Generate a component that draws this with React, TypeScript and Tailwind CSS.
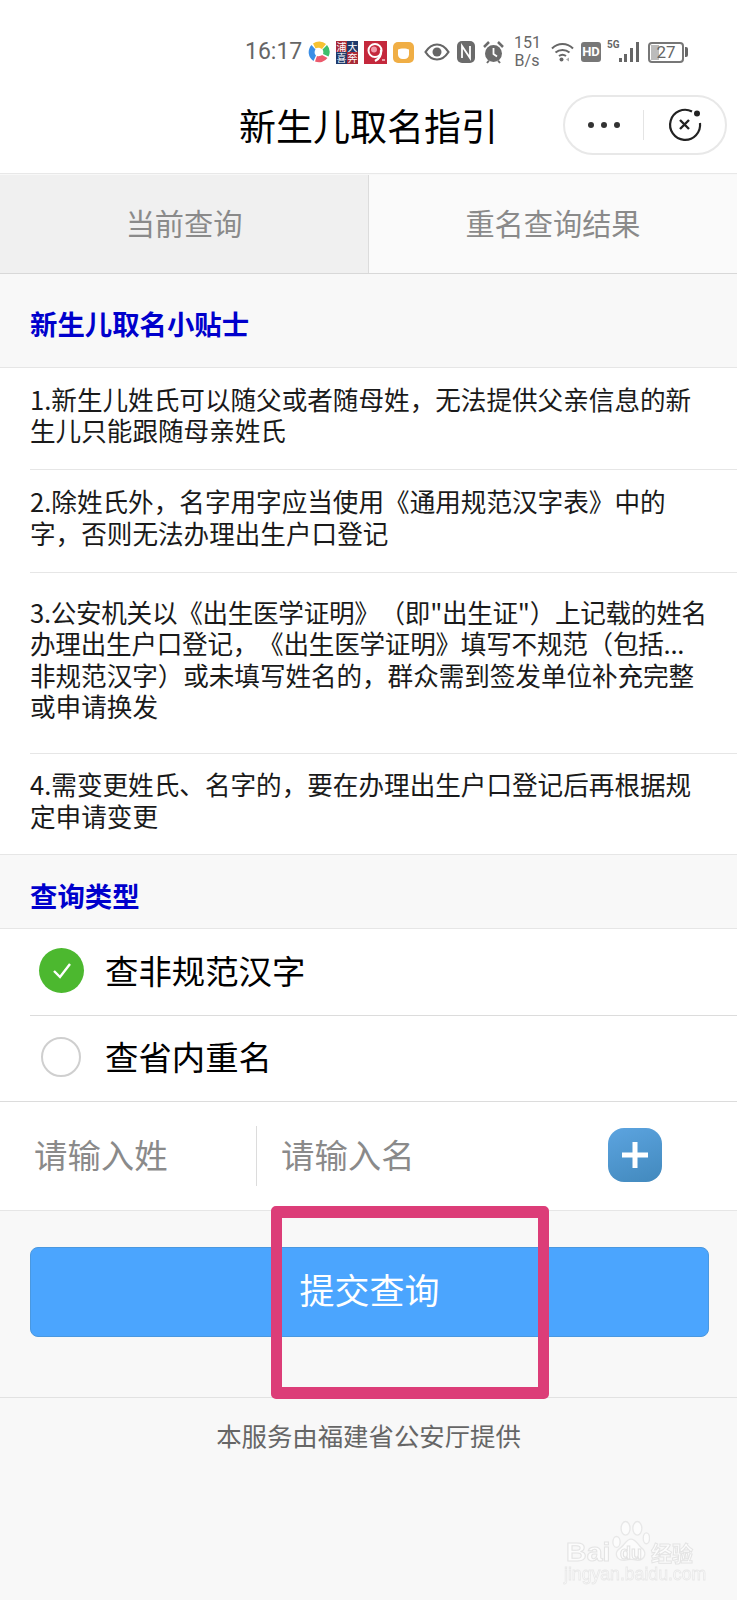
import React from "react";

const root = "font-['Noto_Sans_CJK_SC','Noto_Sans',sans-serif] [text-spacing-trim:space-all]";

function StatusBar() {
  return (
    <div className="h-[85px] bg-white flex items-center pl-[245px] pt-[19px] text-[#666]">
      <span className="text-[23px] w-[63px] font-['Roboto',sans-serif]">16:17</span>
      <svg width="22" height="22" viewBox="0 0 22 22">
        <path d="M5 2.500A10.500 10.500 0 0 1 18 3l-4 5C11 6 9 6.500 7.500 7.500z" fill="#f6c232" />
        <path d="M19 4a10.500 10.500 0 0 1 1.500 11.500L15 13c.5-1.500.5-3-.5-4.500z" fill="#3fbf6b" />
        <path d="M19.500 17A10.500 10.500 0 0 1 7 20.500l2-5.500c2 .5 4 0 5-1z" fill="#ec5a6c" />
        <path d="M5.500 20A10.500 10.500 0 0 1 3.500 4l4 4.500C6 10.500 6.500 13 8 14.500z" fill="#3a8ee6" />
      </svg>
      <div className="ml-[6px] w-[22px] h-[23px] grid grid-cols-2 grid-rows-2 text-white text-[10px] leading-[11px] text-center">
        <span className="bg-[#a82a36]">浦</span>
        <span className="bg-[#1f3a6b]">大</span>
        <span className="bg-[#1f3a6b]">喜</span>
        <span className="bg-[#a82a36]">奔</span>
      </div>
      <svg width="23" height="23" viewBox="0 0 23 23" className="ml-[6px]">
        <rect width="23" height="23" fill="#c4283c" />
        <circle cx="11" cy="9.500" r="6.500" fill="none" stroke="#fff" strokeWidth="2" />
        <circle cx="10" cy="8.500" r="3" fill="#f29bab" />
        <path d="M17 9c.5 5-2 9-6 11" fill="none" stroke="#fff" strokeWidth="2.200" />
        <path d="M18 19h3" stroke="#f3c9cf" strokeWidth="1.500" />
      </svg>
      <svg width="21" height="21" viewBox="0 0 21 21" className="ml-[6px]">
        <rect width="21" height="21" rx="5" fill="#f0ae45" />
        <path d="M5 7.500c2-1.500 9-1.500 11 0v5a4.500 4.500 0 0 1-4.500 4.500h-2A4.500 4.500 0 0 1 5 12.500z" fill="#fff" />
      </svg>
      <svg width="26" height="18" viewBox="0 0 26 18" className="ml-[10px]">
        <path d="M1.500 9C5 3.500 9 1.500 13 1.500S21 3.500 24.500 9C21 14.500 17 16.500 13 16.500S5 14.500 1.500 9z" fill="none" stroke="#666" strokeWidth="2.200" />
        <circle cx="13" cy="9" r="4.500" fill="#666" />
      </svg>
      <svg width="18" height="22" viewBox="0 0 18 22" className="ml-[7px]">
        <rect width="18" height="22" rx="5" fill="#6b6b6b" />
        <path d="M5 17V5l8 12V5" fill="none" stroke="#fff" strokeWidth="1.800" />
      </svg>
      <svg width="21" height="23" viewBox="0 0 21 23" className="ml-[8px]">
        <circle cx="10.500" cy="12.500" r="8.500" fill="#6b6b6b" />
        <path d="M10.500 7v6l3.500 2.500" fill="none" stroke="#fff" strokeWidth="1.800" />
        <path d="M1 6l5-5M20 6l-5-5" stroke="#6b6b6b" strokeWidth="2.500" />
        <path d="M4 22l2-2.500M17 22l-2-2.500" stroke="#6b6b6b" strokeWidth="2" />
      </svg>
      <div className="ml-[10px] w-[26px] text-[16px] leading-[18px] text-center font-['Roboto',sans-serif]">
        151
        <br />
        B/s
      </div>
      <svg width="23" height="20" viewBox="0 0 23 20" className="ml-[11px]">
        <path d="M1 6.500c6-6 15-6 21 0M4.500 10.500c4-3.500 10-3.500 14 0M8 14c2-1.500 5-1.500 7 0" fill="none" stroke="#666" strokeWidth="2" />
        <circle cx="10.500" cy="17.500" r="2" fill="#666" />
        <path d="M15 17.500l3-2v4z" fill="#aaa" />
      </svg>
      <div className="ml-[7px] w-[20px] h-[20px] bg-[#777] rounded-[3px] text-white text-[13px] leading-[20px] text-center font-bold font-['Roboto',sans-serif]">
        HD
      </div>
      <div className="ml-[6px] w-[33px] h-[22px] relative">
        <span className="absolute left-0 top-[-1px] text-[10px] leading-[10px] font-bold font-['Roboto',sans-serif]">5G</span>
        <svg width="33" height="22" viewBox="0 0 33 22" className="absolute left-0 top-0">
          <rect x="12" y="17" width="3" height="4" fill="#666" />
          <rect x="17" y="13" width="3" height="8" fill="#666" />
          <rect x="23" y="7" width="3" height="14" fill="#666" />
          <rect x="29" y="1" width="3" height="20" fill="#666" />
        </svg>
      </div>
      <div className="ml-[8px] w-[36px] h-[21px] border-2 border-[#777] rounded-[4px] relative text-[17px] leading-[17px] text-center font-['Roboto',sans-serif]">
        <div className="absolute left-[1px] top-[1px] bottom-[1px] w-[8px] bg-[#bbb]" />
        <span className="relative">27</span>
      </div>
      <div className="ml-[1px] w-[3px] h-[10px] bg-[#666] rounded-r-[2px]" />
    </div>
  );
}

function TitleBar() {
  return (
    <div className="h-[89px] bg-white border-b border-[#e8e8e8] relative flex items-center pl-[239px] pb-[9px]">
      <span className="text-[37px] leading-[50px] text-black">新生儿取名指引</span>
      <div className="absolute left-[563px] top-[10px] w-[164px] h-[60px] rounded-full border-2 border-[#e8e8e8] flex items-center">
        <div className="w-[78px] flex justify-center gap-[7px]">
          <span className="w-[6px] h-[6px] rounded-full bg-[#333]" />
          <span className="w-[6px] h-[6px] rounded-full bg-[#333]" />
          <span className="w-[6px] h-[6px] rounded-full bg-[#333]" />
        </div>
        <div className="w-[1px] h-[30px] bg-[#e4e4e4]" />
        <svg width="36" height="36" viewBox="0 0 36 36" className="ml-[23px]">
          <path d="M25 4.500A15 15 0 1 0 33 16" fill="none" stroke="#222" strokeWidth="2.200" />
          <circle cx="30" cy="6.500" r="3" fill="#222" />
          <path d="M13 13l9 9M22 13l-9 9" stroke="#222" strokeWidth="2.400" />
        </svg>
      </div>
    </div>
  );
}

const line = "text-[25.600px] leading-[31.500px] text-[#1a1a1a] whitespace-nowrap";

function Paw() {
  return (
    <svg width="38" height="42" viewBox="0 0 42 46">
      <g fill="#fcfcfc" stroke="#e8e8e8" strokeWidth="1.500">
        <ellipse cx="5" cy="24" rx="4" ry="6" />
        <ellipse cx="15" cy="9" rx="5" ry="7.500" />
        <ellipse cx="28" cy="9" rx="5" ry="7.500" />
        <ellipse cx="38" cy="20" rx="3.500" ry="6" />
        <path d="M21 21c5 0 7 5 11 9 4 3 5 6 4 9-1 4-5 6-9 5-4-1-8-1-12 0-5 1-9-1-10-5-1-4 1-6 5-9 4-3 6-9 11-9z" />
      </g>
    </svg>
  );
}

function Watermark() {
  return (
    <div className="absolute left-[566px] top-[1518px] w-[140px] h-[70px] blur-[0.4px]">
      <span className="absolute left-0 top-[14px] text-[26px] leading-[40px] font-bold text-[#fcfcfc] [-webkit-text-stroke:1px_#e4e4e4] font-['Liberation_Sans',sans-serif] scale-x-[1.1] origin-left">
        Bai
      </span>
      <div className="absolute left-[46px] top-[2px]">
        <Paw />
      </div>
      <span className="absolute left-[54px] top-[24px] text-[18px] leading-[22px] font-bold text-[#fcfcfc] [-webkit-text-stroke:1px_#e2e2e2] font-['Liberation_Sans',sans-serif]">
        du
      </span>
      <span className="absolute left-[85px] top-[20px] text-[21px] leading-[28px] font-bold text-[#fcfcfc] [-webkit-text-stroke:1px_#e4e4e4]">
        经验
      </span>
      <span className="absolute left-[-2px] top-[46px] text-[18px] leading-[20px] text-[#fafafa] [-webkit-text-stroke:0.8px_#e8e8e8] whitespace-nowrap font-['Liberation_Sans',sans-serif] scale-x-[0.98] origin-left">
        jingyan.baidu.com
      </span>
    </div>
  );
}

export default function App() {
  return (
    <div className={`relative w-[737px] h-[1600px] overflow-hidden bg-[#f8f8f8] ${root}`}>
      <StatusBar />
      <TitleBar />
      <div className="flex h-[99px] border-b border-[#d8d8d8] bg-[#fafafa] text-[29.200px] text-[#8a8a8a] mt-[1px]">
        <div className="w-[369px] pb-[3px] bg-[#f0f0f0] border-r border-[#dcdcdc] flex items-center justify-center">当前查询</div>
        <div className="flex-1 pb-[3px] flex items-center justify-center">重名查询结果</div>
      </div>
      <div className="h-[94px] pl-[30px] pt-[7px] flex items-center border-b border-[#e6e6e6] bg-[#f8f8f8] text-[#0000cc] text-[27.400px] font-bold">
        新生儿取名小贴士
      </div>
      <div className="bg-white">
        <div className="ml-[30px] h-[102px] pb-[9px] flex flex-col justify-center border-b border-[#e6e6e6]">
          <div className={line}>1.新生儿姓氏可以随父或者随母姓，无法提供父亲信息的新</div>
          <div className={line}>生儿只能跟随母亲姓氏</div>
        </div>
        <div className="ml-[30px] h-[103px] pb-[9px] flex flex-col justify-center border-b border-[#e6e6e6]">
          <div className={line}>2.除姓氏外，名字用字应当使用《通用规范汉字表》中的</div>
          <div className={line}>字，否则无法办理出生户口登记</div>
        </div>
        <div className="ml-[30px] h-[181px] pb-[9px] flex flex-col justify-center border-b border-[#e6e6e6]">
          <div className={`${line} tracking-[-0.300px]`}>3.公安机关以《出生医学证明》（即"出生证"）上记载的姓名</div>
          <div className={`${line} tracking-[-0.250px]`}>办理出生户口登记，《出生医学证明》填写不规范（包括...</div>
          <div className={`${line} tracking-[-0.050px]`}>非规范汉字）或未填写姓名的，群众需到签发单位补充完整</div>
          <div className={line}>或申请换发</div>
        </div>
        <div className="h-[101px] pl-[30px] pb-[9px] flex flex-col justify-center border-b border-[#e6e6e6]">
          <div className={line}>4.需变更姓氏、名字的，要在办理出生户口登记后再根据规</div>
          <div className={line}>定申请变更</div>
        </div>
      </div>
      <div className="h-[74px] pl-[30px] pt-[9px] flex items-center border-b border-[#e6e6e6] bg-[#f8f8f8] text-[#0000cc] text-[27.400px] font-bold">
        查询类型
      </div>
      <div className="bg-white">
        <div className="ml-[30px] h-[87px] pb-[4px] flex items-center border-b border-[#dcdcdc]">
          <div className="w-[45px] h-[45px] ml-[9px] rounded-full bg-[#4cb82f] flex items-center justify-center">
            <svg width="24" height="24" viewBox="0 0 24 24">
              <path d="M4 13l6 6L20 6" fill="none" stroke="#fff" strokeWidth="2.400" />
            </svg>
          </div>
          <span className="ml-[21px] text-[33.400px] text-black">查非规范汉字</span>
        </div>
        <div className="h-[86px] pl-[30px] pb-[4px] flex items-center border-b border-[#dcdcdc]">
          <div className="w-[40px] h-[40px] ml-[11px] rounded-full border-2 border-[#cfcfcf]" />
          <span className="ml-[24px] text-[33.400px] text-black">查省内重名</span>
        </div>
        <div className="h-[109px] flex items-center border-b border-[#e6e6e6] text-[33.400px] text-[#8a8a8a] relative">
          <span className="ml-[34px] w-[222px] pb-[4px]">请输入姓</span>
          <div className="w-[1px] h-[60px] bg-[#dcdcdc]" />
          <span className="ml-[24px] pb-[4px]">请输入名</span>
          <div className="absolute left-[608px] top-[26px] w-[54px] h-[54px] rounded-[16px] bg-[linear-gradient(160deg,#5ca4e0,#4289bd)] flex items-center justify-center blur-[0.5px]">
            <svg width="32" height="32" viewBox="0 0 32 32">
              <path d="M16 3v26M3 16h26" stroke="#fff" strokeWidth="5" />
            </svg>
          </div>
        </div>
      </div>
      <div className="h-[187px] border-b border-[#e2e2e2] pl-[30px] pr-[28px] flex pt-[36px]">
        <div className="h-[90px] w-full rounded-[8px] bg-[#4ba5fe] border border-[#4a98e0] flex items-center justify-center text-white text-[35px] pb-[6px]">
          提交查询
        </div>
      </div>
      <div className="text-center text-[25.400px] text-[#666] pt-[19px] leading-[36px]">本服务由福建省公安厅提供</div>

      <div className="absolute left-[271px] top-[1206px] w-[278px] h-[193px] border-[12px] border-l-[11px] border-r-[11px] border-[#dc3d78] rounded-[5px]" />
      <Watermark />
    </div>
  );
}
